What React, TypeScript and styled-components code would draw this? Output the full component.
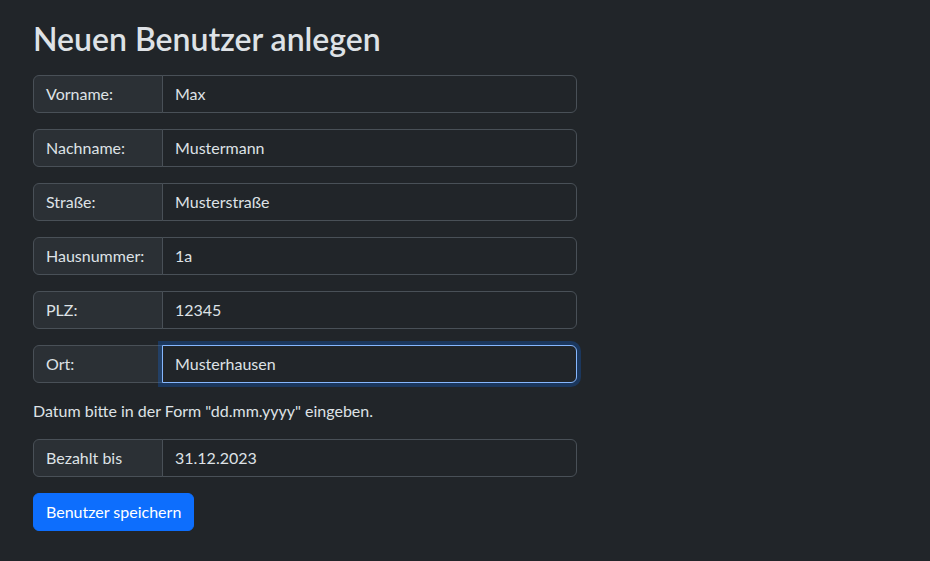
import React from "react"
import styled, { createGlobalStyle } from "styled-components"

const GlobalStyle = createGlobalStyle`
  html, body {
    margin: 0;
    background: #212529;
    color: #dee2e6;
    font-family: Lato, "Noto Sans", sans-serif;
    font-size: 16px;
    line-height: 1.5;
  }
  * { box-sizing: border-box; }
`

const Page = styled.main`
  padding: 20px 33px;
  width: 610px;
`

const Title = styled.h2`
  margin: 0 0 17px;
  font-size: 32px;
  font-weight: 600;
  line-height: 1.2;
`

const Form = styled.form`
  display: flex;
  flex-direction: column;
  width: 544px;
`

const InputGroup = styled.div`
  display: flex;
  margin-bottom: 16px;
  height: 38px;
`

const GroupText = styled.label`
  display: flex;
  align-items: center;
  width: 130px;
  flex: none;
  padding: 6px 12px;
  background: #2b3035;
  border: 1px solid #495057;
  border-radius: 6px 0 0 6px;
  font-size: 16px;
  white-space: nowrap;
`

const Field = styled.input<{ $focused?: boolean }>`
  flex: 1;
  min-width: 0;
  margin-left: -1px;
  padding: 6px 12px;
  background: #212529;
  color: #dee2e6;
  border: 1px solid ${(p) => (p.$focused ? "#86b7fe" : "#495057")};
  border-radius: 0 6px 6px 0;
  font: inherit;
  outline: none;
  box-shadow: ${(p) => (p.$focused ? "0 0 0 4px rgba(13,110,253,.25)" : "none")};
`

const Hint = styled.p`
  margin: 0 0 16px;
`

const Button = styled.button`
  align-self: flex-start;
  padding: 6px 12px;
  background: #0d6efd;
  color: #fff;
  border: 1px solid #0d6efd;
  border-radius: 6px;
  font: inherit;
  cursor: pointer;
`

const fields = [
  { label: "Vorname:", value: "Max" },
  { label: "Nachname:", value: "Mustermann" },
  { label: "Straße:", value: "Musterstraße" },
  { label: "Hausnummer:", value: "1a" },
  { label: "PLZ:", value: "12345" },
  { label: "Ort:", value: "Musterhausen", focused: true },
]

export default function App() {
  return (
    <>
      <GlobalStyle />
      <Page>
        <Title>Neuen Benutzer anlegen</Title>
        <Form onSubmit={(e) => e.preventDefault()}>
          {fields.map((f) => (
            <InputGroup key={f.label}>
              <GroupText>{f.label}</GroupText>
              <Field defaultValue={f.value} $focused={f.focused} />
            </InputGroup>
          ))}
          <Hint>Datum bitte in der Form "dd.mm.yyyy" eingeben.</Hint>
          <InputGroup>
            <GroupText>Bezahlt bis</GroupText>
            <Field defaultValue="31.12.2023" />
          </InputGroup>
          <Button type="submit">Benutzer speichern</Button>
        </Form>
      </Page>
    </>
  )
}
